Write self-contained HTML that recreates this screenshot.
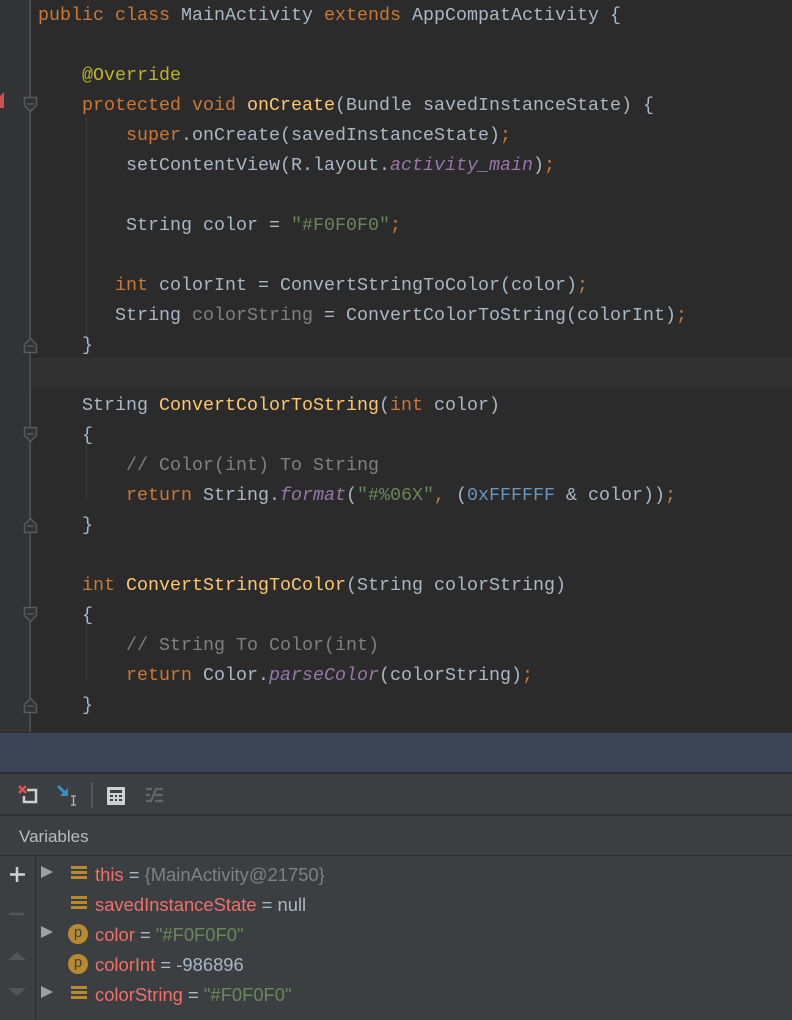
<!DOCTYPE html>
<html><head><style>
*{margin:0;padding:0;box-sizing:border-box}
body{width:792px;height:1020px;background:#2b2b2b;overflow:hidden;position:relative;font-family:"Liberation Sans",sans-serif}
#ed{position:absolute;left:0;top:0;width:792px;height:732px;background:#2b2b2b}
#gut{position:absolute;left:0;top:0;width:30px;height:732px;background:#313335}
#gl{position:absolute;left:29px;top:0;width:2px;height:732px;background:#4b4b4b}
.hl{position:absolute;left:31px;top:358px;width:761px;height:30px;background:#323232}
.ln{position:absolute;left:38px;height:30px;line-height:30px;font-family:"Liberation Mono",monospace;font-size:18.33px;color:#a9b7c6;white-space:pre}
.k{color:#cc7832}.m{color:#ffc66d}.s{color:#6a8759}.a{color:#bbb529}.p{color:#9876aa;font-style:italic}.c{color:#808080}.n{color:#6897bb}.g{color:#808080}
#bar{position:absolute;left:0;top:732px;width:792px;height:40px;background:#3b4553;border-top:1px solid #2b2b2b}
#tb{position:absolute;left:0;top:772px;width:792px;height:248px;background:#3c3f41;border-top:2px solid #2e3032}
#vh{position:absolute;left:0;top:814px;width:792px;height:42px;border-top:2px solid #323232;border-bottom:1px solid #2b2b2b;color:#bbbbbb;font-size:17px;line-height:42px;padding-left:19px}
#lc{position:absolute;left:35px;top:856px;width:1px;height:164px;background:#2b2b2b}
.vr{position:absolute;left:95px;font-size:18.4px;color:#f0706a;height:30px;line-height:30px;white-space:pre}
.vr .e{color:#a9b7c6}.vr .gr{color:#808080}.vr .st{color:#6a8759}
.tri{position:absolute;left:41px;width:0;height:0;border-left:12px solid #a0a0a0;border-top:6px solid transparent;border-bottom:6px solid transparent}
.fld{position:absolute;left:71px;width:16px;height:14px;background:repeating-linear-gradient(#b8892e 0 3px,#3c3f41 3px 5px)}
.pp{position:absolute;left:68px;width:20px;height:20px;border-radius:50%;background:#b8892e;color:#3c3f41;font-size:15px;text-align:center;line-height:18px}
</style></head><body>
<div id="ed">
<div id="gut"></div><div id="gl"></div>
<div class="hl"></div>
<div style="position:absolute;left:86px;top:118px;width:1px;height:222px;background:#3b3b3b"></div>
<div style="position:absolute;left:86px;top:440px;width:1px;height:60px;background:#3b3b3b"></div>
<div style="position:absolute;left:86px;top:620px;width:1px;height:60px;background:#3b3b3b"></div>
<div class="ln" style="top:1px"><span class="k">public class </span>MainActivity <span class="k">extends </span>AppCompatActivity {</div>
<div class="ln" style="top:61px">    <span class="a">@Override</span></div>
<div class="ln" style="top:91px">    <span class="k">protected void </span><span class="m">onCreate</span>(Bundle savedInstanceState) {</div>
<div class="ln" style="top:121px">        <span class="k">super</span>.onCreate(savedInstanceState)<span class="k">;</span></div>
<div class="ln" style="top:151px">        setContentView(R.layout.<span class="p">activity_main</span>)<span class="k">;</span></div>
<div class="ln" style="top:211px">        String color = <span class="s">"#F0F0F0"</span><span class="k">;</span></div>
<div class="ln" style="top:271px">       <span class="k">int </span>colorInt = ConvertStringToColor(color)<span class="k">;</span></div>
<div class="ln" style="top:301px">       String <span class="g">colorString</span> = ConvertColorToString(colorInt)<span class="k">;</span></div>
<div class="ln" style="top:331px">    }</div>
<div class="ln" style="top:391px">    String <span class="m">ConvertColorToString</span>(<span class="k">int </span>color)</div>
<div class="ln" style="top:421px">    {</div>
<div class="ln" style="top:451px">        <span class="c">// Color(int) To String</span></div>
<div class="ln" style="top:481px">        <span class="k">return </span>String.<span class="p">format</span>(<span class="s">"#%06X"</span><span class="k">, </span>(<span class="n">0xFFFFFF </span>&amp; color))<span class="k">;</span></div>
<div class="ln" style="top:511px">    }</div>
<div class="ln" style="top:571px">    <span class="k">int </span><span class="m">ConvertStringToColor</span>(String colorString)</div>
<div class="ln" style="top:601px">    {</div>
<div class="ln" style="top:631px">        <span class="c">// String To Color(int)</span></div>
<div class="ln" style="top:661px">        <span class="k">return </span>Color.<span class="p">parseColor</span>(colorString)<span class="k">;</span></div>
<div class="ln" style="top:691px">    }</div>
<svg style="position:absolute;left:0;top:0" width="40" height="732">
<g fill="#313335" stroke="#5a5a5a" stroke-width="1.5">
<path d="M24.5 97.5h12v8l-6 6l-6-6z"/><path d="M24.5 427.5h12v8l-6 6l-6-6z"/><path d="M24.5 607.5h12v8l-6 6l-6-6z"/>
<path d="M24.5 352.5h12v-8l-6-6l-6 6z"/><path d="M24.5 532.5h12v-8l-6-6l-6 6z"/><path d="M24.5 712.5h12v-8l-6-6l-6 6z"/>
</g>
<g stroke="#5a5a5a" stroke-width="1.5"><path d="M27 104h7M27 434h7M27 614h7M27 346h7M27 526h7M27 706h7"/></g>
<path d="M0 96l4 -4v16h-4z" fill="#c75450"/>
</svg>
</div>
<div id="bar"></div>
<div id="tb">
<svg style="position:absolute;left:0;top:0" width="200" height="40">
<path d="M19 12l7 7M26 12l-7 7" stroke="#d9534f" stroke-width="2.5"/>
<path d="M27 16h9v12h-12v-6" fill="none" stroke="#cfcfcf" stroke-width="2.5"/>
<path d="M58 12l9 9" stroke="#3592c4" stroke-width="3"/><path d="M68 14v8h-8z" fill="#3592c4"/>
<path d="M71 22h5M73.5 22v9M71 31h5" stroke="#bbb" stroke-width="1.3"/>
<rect x="91" y="8" width="2" height="26" fill="#555"/>
<rect x="107" y="13" width="18" height="18" fill="#cfcfcf"/><rect x="110" y="16" width="12" height="3" fill="#3c3f41"/>
<g fill="#3c3f41"><rect x="110" y="21" width="3" height="2"/><rect x="115" y="21" width="2" height="2"/><rect x="119" y="21" width="3" height="2"/><rect x="110" y="25" width="3" height="2"/><rect x="115" y="25" width="2" height="2"/><rect x="119" y="25" width="3" height="2"/></g>
<path d="M146 15h6M146 21h4M146 27h6M155 15h8M155 21h8M155 27h8M151 27l5-12" stroke="#666" stroke-width="2.2"/>
</svg>
</div>
<div id="vh">Variables</div>
<div id="lc"></div>
<svg style="position:absolute;left:0;top:856px" width="35" height="164">
<path d="M17 11v15M10 18.5h15" stroke="#cfcfcf" stroke-width="2.5"/>
<path d="M9 58h15" stroke="#555" stroke-width="2.5"/>
<path d="M8 104l9-8l9 8z" fill="#555"/>
<path d="M8 132l9 8l9-8z" fill="#555"/>
</svg>
<div class="tri" style="top:866px"></div>
<div class="tri" style="top:926px"></div>
<div class="tri" style="top:986px"></div>
<div class="fld" style="top:866px"></div>
<div class="fld" style="top:896px"></div>
<div class="fld" style="top:986px"></div>
<div class="pp" style="top:924px">p</div>
<div class="pp" style="top:954px">p</div>
<div class="vr" style="top:860px">this <span class="e">= </span><span class="gr">{MainActivity@21750}</span></div>
<div class="vr" style="top:890px">savedInstanceState <span class="e">= null</span></div>
<div class="vr" style="top:920px">color <span class="e">= </span><span class="st">"#F0F0F0"</span></div>
<div class="vr" style="top:950px">colorInt <span class="e">= -986896</span></div>
<div class="vr" style="top:980px">colorString <span class="e">= </span><span class="st">"#F0F0F0"</span></div>
</body></html>
